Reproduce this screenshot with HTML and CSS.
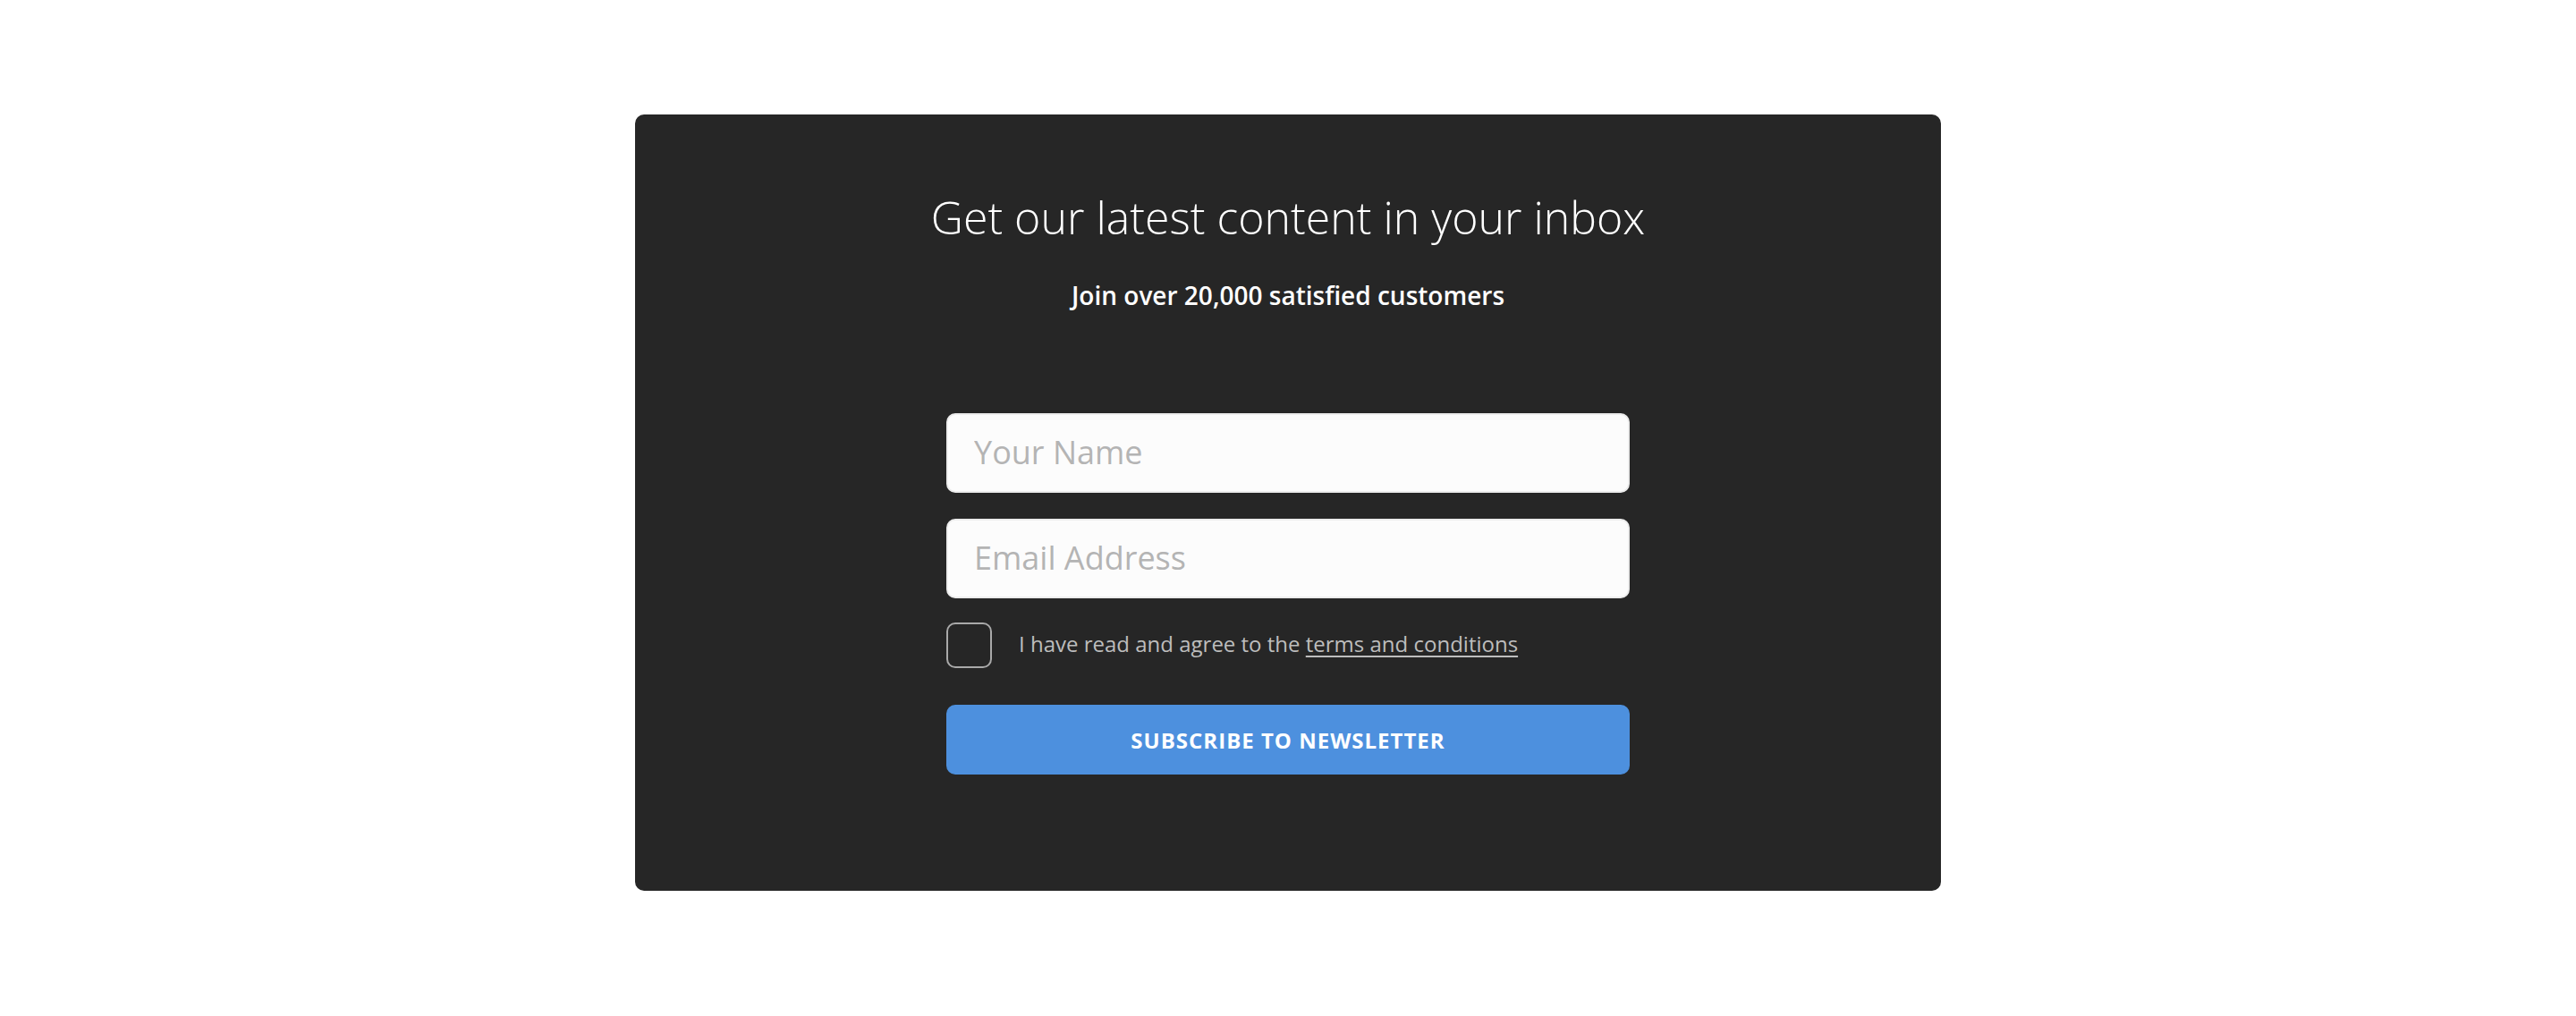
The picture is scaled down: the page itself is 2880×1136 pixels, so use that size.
FILE: index.html
```html
<!DOCTYPE html>
<html lang="en">
<head>
<meta charset="utf-8">
<title>Newsletter</title>
<link rel="stylesheet" href="styles.css">
</head>
<body>
<div class="page">
  <section class="card">
    <h1 class="title">Get our latest content in your inbox</h1>
    <p class="subtitle">Join over 20,000 satisfied customers</p>
    <form class="form">
      <input class="field" type="text" placeholder="Your Name">
      <input class="field" type="email" placeholder="Email Address">
      <label class="agree">
        <input class="check" type="checkbox">
        <span class="agree-text">I have read and agree to the <a class="terms" href="#">terms and conditions</a></span>
      </label>
      <button class="submit" type="button">Subscribe to newsletter</button>
    </form>
  </section>
</div>
</body>
</html>
```

FILE: styles.css
```css
* { box-sizing: border-box; }
html, body { margin: 0; padding: 0; background: #ffffff; }
body { font-family: "Open Sans", "Noto Sans", sans-serif; }

.page {
  display: flex;
  justify-content: center;
  padding-top: 128px;
}

.card {
  width: 1460px;
  height: 868px;
  background: #262626;
  border-radius: 10px;
  padding: 85px 0 0;
  display: flex;
  flex-direction: column;
  align-items: center;
}

.title {
  margin: 0;
  font-size: 50px;
  line-height: 60px;
  font-weight: 300;
  color: #ffffff;
}

.subtitle {
  margin: 37px 0 0;
  font-size: 28px;
  line-height: 40px;
  font-weight: 600;
  color: #ffffff;
}

.form {
  margin-top: 112px;
  width: 764px;
  display: flex;
  flex-direction: column;
}

.field {
  height: 89px;
  margin: 0 0 29px;
  padding: 0 29px 3px;
  border: 2px solid #ececec;
  border-radius: 10px;
  background: #fcfcfc;
  font-family: inherit;
  font-size: 36px;
  color: #333;
  outline: none;
}
.field::placeholder { color: #b4b4b4; }
.field + .field { margin-bottom: 27px; }

.agree {
  display: flex;
  align-items: center;
  gap: 30px;
  cursor: pointer;
}

.check {
  appearance: none;
  -webkit-appearance: none;
  margin: 0;
  width: 51px;
  height: 51px;
  border: 2px solid #a9a9a9;
  border-radius: 10px;
  background: transparent;
  flex: none;
}

.agree-text {
  font-size: 24px;
  line-height: 32px;
  color: #bdbdbd;
  margin-top: -3px;
}

.terms {
  color: #bdbdbd;
  text-decoration: underline;
  text-underline-offset: 4px;
}

.submit {
  margin-top: 41px;
  height: 78px;
  border: none;
  border-radius: 10px;
  background: #4d90de;
  color: #ffffff;
  font-family: inherit;
  font-size: 24px;
  font-weight: 700;
  letter-spacing: 1px;
  text-transform: uppercase;
  cursor: pointer;
}
```
